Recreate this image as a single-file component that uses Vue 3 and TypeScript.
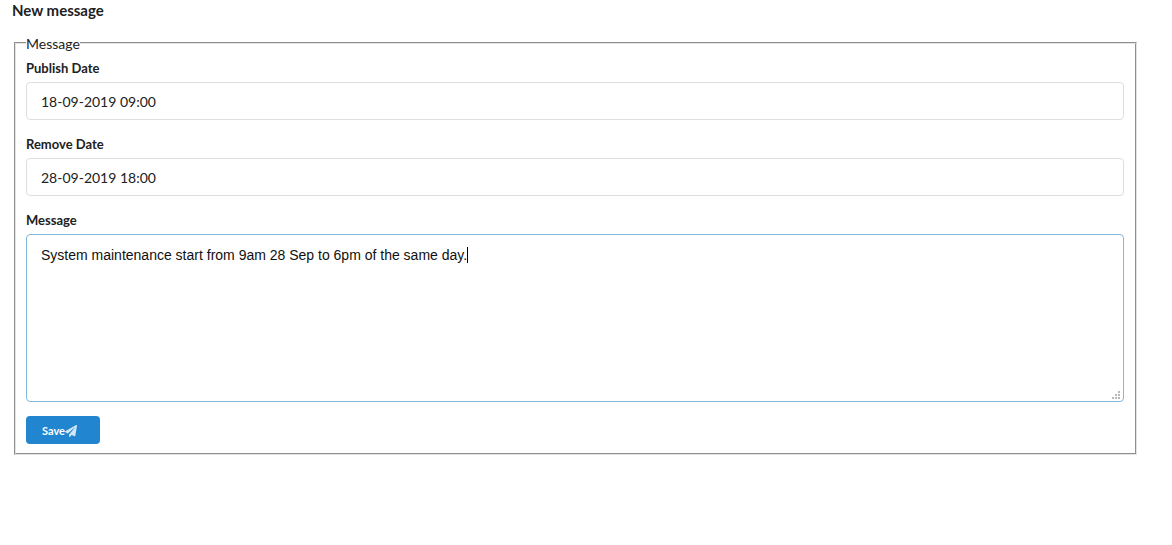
<script setup lang="ts">
import { onMounted, ref } from 'vue'

const publishDate = ref('18-09-2019 09:00')
const removeDate = ref('28-09-2019 18:00')
const message = ref('System maintenance start from 9am 28 Sep to 6pm of the same day.')
const messageBox = ref<HTMLTextAreaElement | null>(null)

onMounted(() => {
  const box = messageBox.value
  if (!box) return
  box.focus()
  box.setSelectionRange(box.value.length, box.value.length)
})
</script>

<template>
  <main class="page">
    <h1 class="title">New message</h1>
    <form class="form" @submit.prevent>
      <fieldset class="group">
        <legend class="legend">Message</legend>
        <div class="field">
          <label class="label" for="publish">Publish Date</label>
          <input id="publish" v-model="publishDate" class="control" type="text" />
        </div>
        <div class="field">
          <label class="label" for="remove">Remove Date</label>
          <input id="remove" v-model="removeDate" class="control" type="text" />
        </div>
        <div class="field">
          <label class="label" for="message">Message</label>
          <div class="area">
            <textarea id="message" ref="messageBox" v-model="message" class="control text" spellcheck="false"></textarea>
            <!-- Repeats the text invisibly so that the caret sits at its end -->
            <div class="mirror" aria-hidden="true"><span class="ghost">{{ message }}</span><span class="caret"></span></div>
            <svg class="grip" viewBox="0 0 8 8" shape-rendering="crispEdges" aria-hidden="true">
              <path d="M6 0h2v2H6zM3 3h2v2H3zM6 3h2v2H6zM0 6h2v2H0zM3 6h2v2H3zM6 6h2v2H6z" fill="#b8b8b8" />
            </svg>
          </div>
        </div>
        <button class="save" type="submit">
          Save<svg class="plane" viewBox="0 0 512 512" aria-hidden="true">
            <path d="M476 3.200L12.500 270.600c-18.100 10.400-15.800 35.600 2.200 43.200L121 358.400l287.300-253.200c5.500-4.900 13.300 2.600 8.600 8.300L176 407v80.500c0 23.600 28.500 32.900 42.500 15.800L282 426l124.600 52.200c14.200 6 30.400-2.900 33-18.200l72-432C515 7.800 493.300-6.800 476 3.200z" fill="currentColor" />
          </svg>
        </button>
      </fieldset>
    </form>
  </main>
</template>

<style>
body {
  margin: 0;
  background: #fff;
}
</style>

<style scoped>
.page {
  padding: 0 35px 0 12px;
  font-family: Lato, "Liberation Sans", sans-serif;
  font-size: 14px;
  line-height: 20px;
  color: #212121;
}

.title {
  margin: 0 0 12px;
  font-size: 15px;
  line-height: 21px;
  font-weight: 700;
}

.form {
  margin-left: 2px;
}

.group {
  min-width: 0;
  margin: 0;
  padding: 5px 11px 9px 10px;
  border: 2px groove #e3e3e3;
}

.legend {
  padding: 2px 0 0;
  line-height: 18px;
}

.field {
  margin-bottom: 14px;
}

.label {
  display: block;
  margin-bottom: 4px;
  font-size: 13px;
  line-height: 20px;
  font-weight: 700;
}

.control {
  display: block;
  box-sizing: border-box;
  width: 100%;
  height: 38px;
  margin: 0;
  padding: 0 14px;
  border: 1px solid #dedede;
  border-radius: 4px;
  outline: none;
  background: #fff;
  font-family: Lato, "Liberation Sans", sans-serif;
  font-size: 14px;
  color: #212121;
}

.area {
  position: relative;
}

.text {
  height: 168px;
  padding: 11px 14px;
  border-color: #85b7d9;
  font-family: "Liberation Sans", Arial, sans-serif;
  line-height: 18px;
  color: #111;
  caret-color: transparent;
  resize: none;
}

.mirror {
  position: absolute;
  inset: 0;
  padding: 12px 15px;
  font-family: "Liberation Sans", Arial, sans-serif;
  line-height: 18px;
  white-space: pre-wrap;
  pointer-events: none;
}

.ghost {
  visibility: hidden;
}

.caret {
  display: inline-block;
  width: 1px;
  height: 16px;
  background: #000;
  vertical-align: text-bottom;
}

.grip {
  position: absolute;
  right: 4px;
  bottom: 3px;
  width: 8px;
  height: 8px;
}

.save {
  display: flex;
  align-items: center;
  width: 74px;
  height: 28px;
  padding: 2px 16px 0;
  border: 0;
  border-radius: 4px;
  background: #2185d0;
  color: #fff;
  font-family: Lato, "Liberation Sans", sans-serif;
  font-size: 11px;
  line-height: 12px;
  font-weight: 700;
}

.plane {
  flex: none;
  width: 12px;
  height: 12px;
  opacity: 0.8;
}
</style>
